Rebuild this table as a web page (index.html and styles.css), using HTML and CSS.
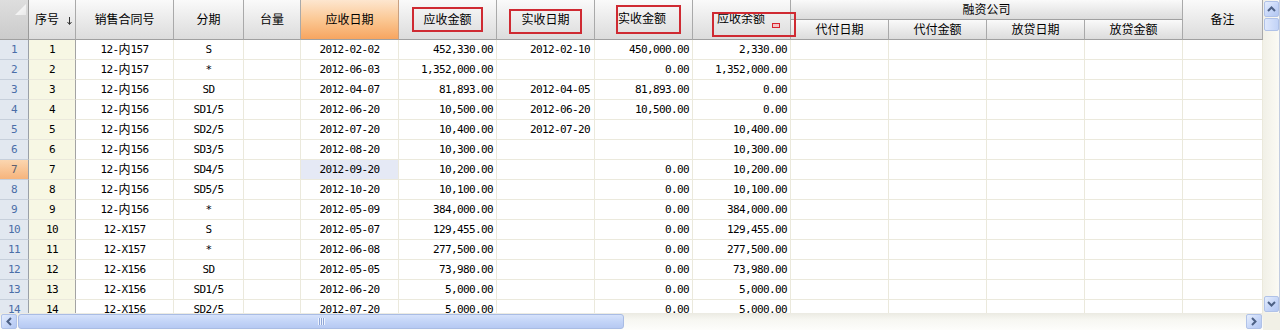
FILE: index.html
```html
<!DOCTYPE html>
<html lang="zh-CN">
<head>
<meta charset="utf-8">
<title>应收款明细</title>
<link rel="stylesheet" href="styles.css">
</head>
<body>
<div class="grid-view">
  <div class="viewport">
    <table class="sheet">
      <colgroup>
        <col class="w-rh"><col class="w-sn"><col class="w-ht"><col class="w-fq"><col class="w-tl">
        <col class="w-98"><col class="w-98"><col class="w-98"><col class="w-98"><col class="w-98">
        <col class="w-98"><col class="w-98"><col class="w-98"><col class="w-98"><col class="w-bz">
      </colgroup>
      <thead>
        <tr>
          <th rowspan="2" class="corner"><div class="tri"></div></th>
          <th rowspan="2" class="h-sn">序号<svg class="sort" width="5" height="8" viewBox="0 0 5 8"><path d="M2.5 0V7M0.5 5L2.5 7.5L4.5 5" fill="none" stroke="#333" stroke-width="1"/></svg></th>
          <th rowspan="2">销售合同号</th>
          <th rowspan="2">分期</th>
          <th rowspan="2">台量</th>
          <th rowspan="2" class="sel">应收日期</th>
          <th rowspan="2" class="marked">应收金额<span class="box box-a"></span></th>
          <th rowspan="2" class="marked">实收日期<span class="box box-b"></span></th>
          <th rowspan="2" class="marked h-left h-ss">实收金额<span class="box box-c"></span></th>
          <th rowspan="2" class="marked h-left h-ye">应收余额<span class="box box-d"></span><span class="box box-e"></span></th>
          <th colspan="4" class="group">融资公司</th>
          <th rowspan="2">备注</th>
        </tr>
        <tr class="sub">
          <th>代付日期</th>
          <th>代付金额</th>
          <th>放贷日期</th>
          <th>放贷金额</th>
        </tr>
      </thead>
      <tbody>
        <tr><td class="rh">1</td><td class="sn">1</td><td class="c">12-<span class="cn">内</span>157</td><td class="c">S</td><td></td><td class="c">2012-02-02</td><td class="r">452,330.00</td><td class="d">2012-02-10</td><td class="r">450,000.00</td><td class="r">2,330.00</td><td></td><td></td><td></td><td></td><td></td></tr>
        <tr><td class="rh">2</td><td class="sn">2</td><td class="c">12-<span class="cn">内</span>157</td><td class="c">*</td><td></td><td class="c">2012-06-03</td><td class="r">1,352,000.00</td><td class="d"></td><td class="r">0.00</td><td class="r">1,352,000.00</td><td></td><td></td><td></td><td></td><td></td></tr>
        <tr><td class="rh">3</td><td class="sn">3</td><td class="c">12-<span class="cn">内</span>156</td><td class="c">SD</td><td></td><td class="c">2012-04-07</td><td class="r">81,893.00</td><td class="d">2012-04-05</td><td class="r">81,893.00</td><td class="r">0.00</td><td></td><td></td><td></td><td></td><td></td></tr>
        <tr><td class="rh">4</td><td class="sn">4</td><td class="c">12-<span class="cn">内</span>156</td><td class="c">SD1/5</td><td></td><td class="c">2012-06-20</td><td class="r">10,500.00</td><td class="d">2012-06-20</td><td class="r">10,500.00</td><td class="r">0.00</td><td></td><td></td><td></td><td></td><td></td></tr>
        <tr><td class="rh">5</td><td class="sn">5</td><td class="c">12-<span class="cn">内</span>156</td><td class="c">SD2/5</td><td></td><td class="c">2012-07-20</td><td class="r">10,400.00</td><td class="d">2012-07-20</td><td class="r"></td><td class="r">10,400.00</td><td></td><td></td><td></td><td></td><td></td></tr>
        <tr><td class="rh">6</td><td class="sn">6</td><td class="c">12-<span class="cn">内</span>156</td><td class="c">SD3/5</td><td></td><td class="c">2012-08-20</td><td class="r">10,300.00</td><td class="d"></td><td class="r"></td><td class="r">10,300.00</td><td></td><td></td><td></td><td></td><td></td></tr>
        <tr class="cur"><td class="rh">7</td><td class="sn">7</td><td class="c">12-<span class="cn">内</span>156</td><td class="c">SD4/5</td><td></td><td class="c active">2012-09-20</td><td class="r">10,200.00</td><td class="d"></td><td class="r">0.00</td><td class="r">10,200.00</td><td></td><td></td><td></td><td></td><td></td></tr>
        <tr><td class="rh">8</td><td class="sn">8</td><td class="c">12-<span class="cn">内</span>156</td><td class="c">SD5/5</td><td></td><td class="c">2012-10-20</td><td class="r">10,100.00</td><td class="d"></td><td class="r">0.00</td><td class="r">10,100.00</td><td></td><td></td><td></td><td></td><td></td></tr>
        <tr><td class="rh">9</td><td class="sn">9</td><td class="c">12-<span class="cn">内</span>156</td><td class="c">*</td><td></td><td class="c">2012-05-09</td><td class="r">384,000.00</td><td class="d"></td><td class="r">0.00</td><td class="r">384,000.00</td><td></td><td></td><td></td><td></td><td></td></tr>
        <tr><td class="rh">10</td><td class="sn">10</td><td class="c">12-X157</td><td class="c">S</td><td></td><td class="c">2012-05-07</td><td class="r">129,455.00</td><td class="d"></td><td class="r">0.00</td><td class="r">129,455.00</td><td></td><td></td><td></td><td></td><td></td></tr>
        <tr><td class="rh">11</td><td class="sn">11</td><td class="c">12-X157</td><td class="c">*</td><td></td><td class="c">2012-06-08</td><td class="r">277,500.00</td><td class="d"></td><td class="r">0.00</td><td class="r">277,500.00</td><td></td><td></td><td></td><td></td><td></td></tr>
        <tr><td class="rh">12</td><td class="sn">12</td><td class="c">12-X156</td><td class="c">SD</td><td></td><td class="c">2012-05-05</td><td class="r">73,980.00</td><td class="d"></td><td class="r">0.00</td><td class="r">73,980.00</td><td></td><td></td><td></td><td></td><td></td></tr>
        <tr><td class="rh">13</td><td class="sn">13</td><td class="c">12-X156</td><td class="c">SD1/5</td><td></td><td class="c">2012-06-20</td><td class="r">5,000.00</td><td class="d"></td><td class="r">0.00</td><td class="r">5,000.00</td><td></td><td></td><td></td><td></td><td></td></tr>
        <tr><td class="rh">14</td><td class="sn">14</td><td class="c">12-X156</td><td class="c">SD2/5</td><td></td><td class="c">2012-07-20</td><td class="r">5,000.00</td><td class="d"></td><td class="r">0.00</td><td class="r">5,000.00</td><td></td><td></td><td></td><td></td><td></td></tr>
      </tbody>
    </table>
  </div>
  <div class="vscroll">
    <div class="sbtn"><svg width="9" height="6" viewBox="0 0 9 6"><path d="M1 5L4.5 1.5L8 5" fill="none" stroke="#4d6185" stroke-width="2"/></svg></div>
    <div class="vthumb"></div>
    <div class="vtrack"></div>
    <div class="sbtn"><svg width="9" height="6" viewBox="0 0 9 6"><path d="M1 1L4.5 4.5L8 1" fill="none" stroke="#4d6185" stroke-width="2"/></svg></div>
  </div>
  <div class="hscroll">
    <div class="sbtn hbtn"><svg width="6" height="9" viewBox="0 0 6 9"><path d="M5 1L1.5 4.5L5 8" fill="none" stroke="#4d6185" stroke-width="2"/></svg></div>
    <div class="hthumb"><span class="grip"></span></div>
    <div class="htrack"></div>
    <div class="sbtn hbtn"><svg width="6" height="9" viewBox="0 0 6 9"><path d="M1 1L4.5 4.5L1 8" fill="none" stroke="#4d6185" stroke-width="2"/></svg></div>
  </div>
  <div class="sizer"></div>
</div>
</body>
</html>
```

FILE: styles.css
```css
* { box-sizing: border-box; }
html, body { margin: 0; padding: 0; background: #fff; }
body {
  width: 1280px;
  height: 330px;
  overflow: hidden;
  font-family: "DejaVu Sans Mono", "Noto Sans CJK SC", monospace;
  color: #000;
}

.grid-view {
  display: grid;
  grid-template-columns: 1263px 17px;
  grid-template-rows: 313px 17px;
  width: 1280px;
  height: 330px;
}

.viewport { overflow: hidden; background: #fff; }

.sheet {
  border-collapse: separate;
  border-spacing: 0;
  table-layout: fixed;
  width: 1263px;
}
.w-rh { width: 29px; }
.w-sn { width: 47px; }
.w-ht { width: 98px; }
.w-fq { width: 70px; }
.w-tl { width: 57px; }
.w-98 { width: 98px; }
.w-bz { width: 80px; }

.sheet tr { height: 20px; }

.sheet th {
  font-family: "Noto Sans CJK SC", sans-serif;
  font-size: 12px;
  font-weight: normal;
  line-height: 14px;
  padding: 0 0 2px 0;
  text-align: center;
  white-space: nowrap;
  background: linear-gradient(#fafafa 0%, #ececec 45%, #dcdcdc 100%);
  border-right: 1px solid #a9a9a9;
  border-bottom: 1px solid #a0a0a0;
  color: #000;
}
.sheet th.group { padding: 0 0 1px 0; }
.sheet tr.sub th { padding: 0 0 1px 0; }

.sheet th.corner {
  vertical-align: top;
  padding: 4px 0 0 15px;
  background: linear-gradient(#dedede, #cbcbcb);
  border-right: 1px solid #9a9a9a;
}
.tri {
  width: 11px;
  height: 11px;
  background: linear-gradient(135deg, #ffffff, #e9e9e9);
  clip-path: polygon(100% 0, 100% 100%, 0 100%);
}

.sheet th.h-sn { text-align: left; padding-left: 6px; }
.sort { margin-left: 8px; vertical-align: -1px; }

.sheet th.sel {
  background: linear-gradient(#fde6cf 0%, #fbc894 50%, #f7a560 100%);
  border-right: 1px solid #c9a080;
}

.sheet th.marked { position: relative; }
.sheet th.h-left { text-align: left; }
.sheet th.h-ss { padding-left: 23px; padding-bottom: 4px; }
.sheet th.h-ye { padding-left: 24px; padding-bottom: 3px; }

.box {
  position: absolute;
  border: 2px solid #cf2a32;
  pointer-events: none;
}
.box-a { left: 13px; top: 7px; width: 71px; height: 25px; }
.box-b { left: 12px; top: 9px; width: 73px; height: 25px; }
.box-c { left: 21px; top: 5px; width: 65px; height: 29px; }
.box-d { left: 19px; top: 12px; width: 84px; height: 25px; z-index: 2; }
.box-e { left: 79px; top: 23px; width: 8px; height: 5px; z-index: 2; border: 1px solid #d8222c; background: #f3c4c6; }

.sheet td {
  font-size: 11px;
  letter-spacing: -0.62px;
  line-height: 14px;
  padding: 0 3px;
  white-space: nowrap;
  overflow: hidden;
  background: #fff;
  border-right: 1px solid #ebe9dc;
  border-bottom: 1px solid #ebe9dc;
  color: #000;
}
.sheet td .cn {
  font-family: "Noto Sans CJK SC", sans-serif;
  font-size: 12px;
  letter-spacing: 0;
  line-height: 1;
  vertical-align: -1px;
}
.sheet td.c { text-align: center; }
.sheet td.r { text-align: right; padding-right: 3px; }
.sheet td.d { text-align: right; padding-right: 4px; }

.sheet td.rh {
  text-align: center;
  color: #4a6ea8;
  background: #e2e8f0;
  border-right: 1px solid #9aa0a8;
  border-bottom: 1px solid #c6cfdb;
  padding: 0;
}
.sheet tr.cur td.rh {
  background: linear-gradient(#fbd6b0, #f6b47c);
  color: #5c5f70;
}
.sheet td.sn {
  text-align: center;
  background: #f7f7e4;
  border-right: 1px solid #a3a3a3;
}
.sheet td.active { background: #e5e9f5; }

/* scrollbars */
.vscroll {
  display: flex;
  flex-direction: column;
  align-items: center;
  padding: 1px 0;
  background: linear-gradient(90deg, #f1f0e7, #fbfaf4);
  border-right: 1px solid #c3cde0;
}
.sbtn {
  width: 15px;
  height: 16px;
  flex: none;
  display: flex;
  align-items: center;
  justify-content: center;
  border: 1px solid #b0c2e8;
  border-radius: 2px;
  background: linear-gradient(135deg, #e6eefd 0%, #c6d6f8 55%, #b3c7f2 100%);
}
.vthumb {
  width: 15px;
  height: 13px;
  margin-top: 1px;
  border: 1px solid #b0c2e8;
  border-radius: 2px;
  background: linear-gradient(90deg, #dfe8fc, #c2d3f7);
}
.vtrack { flex: 1; }

.hscroll {
  display: flex;
  align-items: center;
  padding: 0 1px;
  background: linear-gradient(#ebeae2, #f7f7f2 40%, #fdfdfb);
}
.hbtn { width: 16px; height: 15px; }
.hthumb {
  width: 606px;
  height: 15px;
  margin-left: 1px;
  display: flex;
  align-items: center;
  justify-content: center;
  border: 1px solid #a9bce4;
  border-radius: 3px;
  background: linear-gradient(#d6e2fb, #c3d4f7 50%, #b6c9f2);
}
.grip {
  width: 7px;
  height: 7px;
  background: repeating-linear-gradient(90deg, #eef3fe 0 1px, #8fa6d6 1px 2px);
}
.htrack { flex: 1; }
.sizer { background: #f1f0e6; }
```
